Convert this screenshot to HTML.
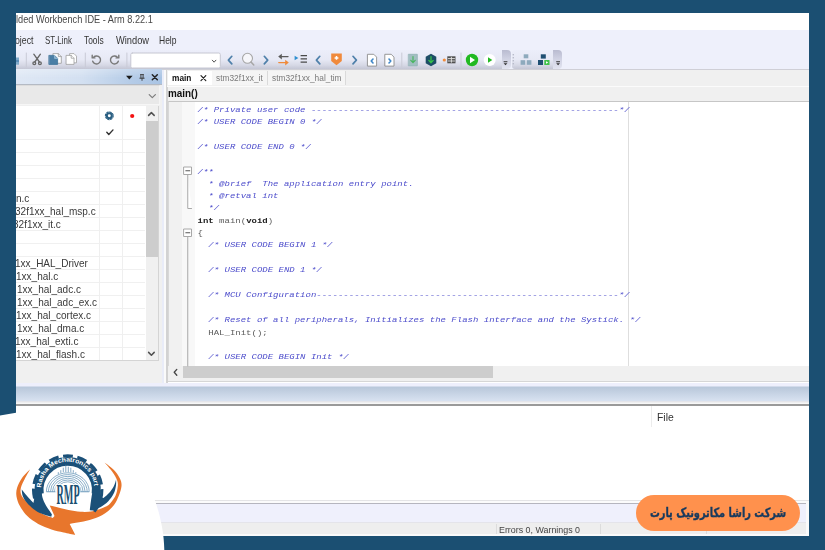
<!DOCTYPE html>
<html lang="en">
<head>
<meta charset="utf-8">
<title>Embedded Workbench IDE - Arm 8.22.1</title>
<style>
*{box-sizing:border-box;margin:0;padding:0}
html,body{width:825px;height:550px;overflow:hidden;background:#1b4f72}
body{position:relative;font-family:"Liberation Sans",sans-serif;color:#222}
.abs{position:absolute}
#win{position:absolute;left:16px;top:12px;width:793.3px;height:523.8px;background:#fff;overflow:hidden}
.t{position:absolute;white-space:nowrap;transform-origin:0 50%;font-family:"Liberation Sans",sans-serif}
#title{left:0;top:0;width:794px;height:18px;background:#fff}
#menu{left:0;top:18px;width:794px;height:20px;background:#eef0fb}
#tool{left:0;top:37.5px;width:794px;height:20px;background:#eef0fb}
.strip{position:absolute;top:0;height:19.5px;background:linear-gradient(#eceefa 0%,#e7e9f5 50%,#d6d8e5 80%,#c4c6d4 100%)}
.cap{position:absolute;top:0;width:9px;height:19.5px;border-radius:0 4px 4px 0;background:linear-gradient(#b9bbd0 0%,#cfd1e2 45%,#e2e4f0 100%)}
#toolline{left:0;top:57px;width:794px;height:1px;background:#cfcfd6}
/* left panel */
#lp{left:0;top:58px;width:146px;height:313px;background:#f0f0f0}
#lphead{left:0;top:-.8px;width:146px;height:16.200px;background:linear-gradient(180deg,rgba(255,255,255,.25) 0,rgba(255,255,255,0) 60%),linear-gradient(90deg,#dfe8f5 0,#d3e0f1 45%,#b4cbe7 80%,#a9c4e4 100%);border-bottom:1.200px solid #b4bac4}
#lpdrop{left:0;top:15.200px;width:143.500px;height:19.600px;background:#e9e9e9;border-bottom:1.500px solid #f6f6f6;border-right:1px solid #f4f4f4;border-top:1px solid #dcdcdc}
#tree{left:0;top:36px;width:143px;height:255px;background:#fff;border-right:1px solid #d4d4d4;border-bottom:1px solid #d4d4d4;overflow:hidden}
.row{position:absolute;left:0;width:129px;height:1px;background:#f0f0f0}
.col{position:absolute;top:0;width:1px;height:255px;background:#efefef}
#sb{left:129.5px;top:0;width:12.5px;height:254px;background:#f0f0f0}
#sbthumb{left:0;top:15px;width:12.5px;height:136px;background:#cdcdcd}
#lpb{left:146px;top:58px;width:4px;height:313px;background:linear-gradient(90deg,#e9ecf8 0,#e9ecf8 2.5px,#fafafa 2.5px)}
/* editor */
#ed{left:150px;top:58px;width:644px;height:312px;background:#f0f0f0;border-bottom:1px solid #d6d6d6}
#edframe{left:0;top:0;width:1.5px;height:313px;background:#d2d2d2}
#tabs{left:1px;top:0;width:642px;height:16px;background:#f0f0f0}
.tab{position:absolute;top:1px;height:14px;background:#f5f5f5;border-right:1px solid #dadada}
.tab.act{background:#fff;border:none}
#fnline{left:1px;top:15.5px;width:642px;height:1.5px;background:#fbfbfb}
#code{left:1.5px;top:31px;width:641.5px;height:265.2px;background:#fff;border-top:1px solid #c6c6c6;border-left:1px solid #d8d8d8;overflow:hidden}
#gut{left:0;top:0;width:27px;height:266px;background:linear-gradient(90deg,#f1f1f1 0,#f1f1f1 13px,#f8f8f8 13px,#f8f8f8 26.5px,#fff 26.5px)}
#margin{left:459.3px;top:0;width:1px;height:266px;background:#dedede}
pre{position:absolute;left:29px;top:2.4px;font-family:"Liberation Mono",monospace;font-size:9px;line-height:14.03px;color:#4c4ccb;font-style:italic;white-space:pre;filter:blur(.35px);transform:scaleY(.88);transform-origin:0 0}
pre b{color:#222;font-style:normal}
pre i{color:#5c5c5c;font-style:normal}
#hs{left:1.5px;top:296.2px;width:641.5px;height:12.2px;background:#f0f0f0}
#hsthumb{left:15px;top:0;width:310px;height:12.2px;background:#cdcdcd}
/* band */
#band{left:0;top:370.5px;width:794px;height:22px;background:linear-gradient(#eeeffc 0,#eeeffc 3px,#b8c7da 4px,#d7e1f0 17.5px,#e4e5ea 18.5px,#f4f4f4 20px,#fff 22px)}
#bandline{left:0;top:392.2px;width:794px;height:1.6px;background:#9a9a9a}
#build{left:0;top:394px;width:794px;height:96px;background:#fff}
#fileline{left:635px;top:394px;width:1px;height:21px;background:#ececec}
#bt1{left:0;top:487.5px;width:794px;height:1.5px;background:#e4e4e6}
#bt0{left:0;top:489px;width:794px;height:2px;background:#fbfbfb}
#bt2{left:0;top:490.6px;width:794px;height:1.6px;background:#b5b5be}
#bt{left:0;top:492px;width:794px;height:18px;background:#eff0fc}
#status{left:0;top:510px;width:794px;height:14px;background:#eeeeee;border-top:1px solid #e4e4ea}
.ssep{position:absolute;top:1px;width:1px;height:13px;background:#dcdcdc}
/* overlays */
#ov{position:absolute;left:0;top:0;width:825px;height:550px}
#pill{left:636px;top:495px;width:164px;height:36px;border-radius:18px;background:#ff914d}
#pill span{position:absolute;left:0;top:0;width:164px;height:36px;text-align:center;font-family:"DejaVu Sans","Liberation Sans",sans-serif;font-weight:bold;font-size:9.8px;line-height:36.500px;color:#173a5e;direction:rtl;white-space:nowrap;transform:scaleY(1.32);-webkit-text-stroke:.3px #173a5e}
</style>
</head>
<body>
<div id="win">
  <div id="title" class="abs"></div>
  <div id="menu" class="abs"></div>
  <div id="tool" class="abs">
    <div class="strip" style="left:0;width:486px"></div><div class="cap" style="left:485.5px"></div>
    <div class="strip" style="left:496px;width:42px;border-radius:3px 0 0 3px"></div><div class="cap" style="left:537px"></div>
  </div>
  <div id="toolline" class="abs"></div>

  <div id="lp" class="abs">
    <div id="lphead" class="abs"></div>
    <div id="lpdrop" class="abs"></div>
    <div id="tree" class="abs">
      <div class="row" style="top:33px"></div><div class="row" style="top:46px"></div><div class="row" style="top:59px"></div><div class="row" style="top:72px"></div><div class="row" style="top:85px"></div><div class="row" style="top:98px"></div><div class="row" style="top:111px"></div><div class="row" style="top:124px"></div><div class="row" style="top:137px"></div><div class="row" style="top:150px"></div><div class="row" style="top:163px"></div><div class="row" style="top:176px"></div><div class="row" style="top:189px"></div><div class="row" style="top:202px"></div><div class="row" style="top:215px"></div><div class="row" style="top:228px"></div><div class="row" style="top:241px"></div>
      <div class="col" style="left:83px"></div><div class="col" style="left:106px"></div>
      <div id="sb" class="abs"><div id="sbthumb" class="abs"></div></div>
    </div>
  </div>
  <div id="lpb" class="abs"></div>

  <div id="ed" class="abs">
    <div id="edframe" class="abs"></div>
    <div id="tabs" class="abs">
      <div class="tab act" style="left:0.5px;width:44px"></div>
      <div class="tab" style="left:44.5px;width:56.5px"></div>
      <div class="tab" style="left:101px;width:78px"></div>
    </div>
    <div id="fnline" class="abs"></div>
    <div id="code" class="abs">
      <div id="gut" class="abs"></div>
      <div id="margin" class="abs"></div>
<pre>/* Private user code ---------------------------------------------------------*/
/* USER CODE BEGIN 0 */

/* USER CODE END 0 */

/**
  * @brief  The application entry point.
  * @retval int
  */
<b>int</b> <i>main(</i><b>void</b><i>)</i>
<i>{</i>
  /* USER CODE BEGIN 1 */

  /* USER CODE END 1 */

  /* MCU Configuration--------------------------------------------------------*/

  /* Reset of all peripherals, Initializes the Flash interface and the Systick. */
  <i>HAL_Init();</i>

  /* USER CODE BEGIN Init */
</pre>
    </div>
    <div id="hs" class="abs"><div id="hsthumb" class="abs"></div></div>
  </div>

  <div id="band" class="abs"></div>
  <div id="bandline" class="abs"></div>
  <div id="build" class="abs"></div>
  <div id="fileline" class="abs"></div>
  <div id="bt1" class="abs"></div>
  <div id="bt0" class="abs"></div>
  <div id="bt2" class="abs"></div>
  <div id="bt" class="abs"></div>
  <div id="status" class="abs"><div class="ssep" style="left:480px"></div><div class="ssep" style="left:584px"></div><div class="ssep" style="left:690px"></div></div>
<div class="abs" style="left:789.500px;top:489px;width:4px;height:35px;background:#fafafa"></div><div class="abs" style="left:0;top:521.800px;width:794px;height:2px;background:#fafafa"></div>
<span class="t" style="left:-0.50px;top:1.47px;font-size:10.2px;line-height:13px;font-weight:normal;color:#484848;transform:scaleX(0.9025);filter:blur(0.35px)">lded Workbench IDE - Arm 8.22.1</span>
<span class="t" style="left:-0.80px;top:21.73px;font-size:10.3px;line-height:13px;font-weight:normal;color:#333;transform:scaleX(0.8500);filter:blur(0.35px)">oject</span>
<span class="t" style="left:29.00px;top:21.73px;font-size:10.3px;line-height:13px;font-weight:normal;color:#333;transform:scaleX(0.7703);filter:blur(0.35px)">ST-Link</span>
<span class="t" style="left:68.20px;top:21.73px;font-size:10.3px;line-height:13px;font-weight:normal;color:#333;transform:scaleX(0.8151);filter:blur(0.35px)">Tools</span>
<span class="t" style="left:100.20px;top:21.73px;font-size:10.3px;line-height:13px;font-weight:normal;color:#333;transform:scaleX(0.9010);filter:blur(0.35px)">Window</span>
<span class="t" style="left:142.50px;top:21.73px;font-size:10.3px;line-height:13px;font-weight:normal;color:#333;transform:scaleX(0.8260);filter:blur(0.35px)">Help</span>
<span class="t" style="left:0.15px;top:178.72px;font-size:11.5px;line-height:15px;font-weight:normal;color:#3a3a3a;transform:scaleX(0.8700);filter:blur(0.35px)">n.c</span>
<span class="t" style="left:-0.85px;top:191.72px;font-size:11.5px;line-height:15px;font-weight:normal;color:#3a3a3a;transform:scaleX(0.8700);filter:blur(0.35px)">32f1xx_hal_msp.c</span>
<span class="t" style="left:-2.84px;top:204.72px;font-size:11.5px;line-height:15px;font-weight:normal;color:#3a3a3a;transform:scaleX(0.8700);filter:blur(0.35px)">32f1xx_it.c</span>
<span class="t" style="left:-1.35px;top:243.72px;font-size:11.5px;line-height:15px;font-weight:normal;color:#3a3a3a;transform:scaleX(0.8700);filter:blur(0.35px)">1xx_HAL_Driver</span>
<span class="t" style="left:-0.28px;top:256.72px;font-size:11.5px;line-height:15px;font-weight:normal;color:#3a3a3a;transform:scaleX(0.8700);filter:blur(0.35px)">1xx_hal.c</span>
<span class="t" style="left:1.03px;top:269.72px;font-size:11.5px;line-height:15px;font-weight:normal;color:#3a3a3a;transform:scaleX(0.8700);filter:blur(0.35px)">1xx_hal_adc.c</span>
<span class="t" style="left:1.41px;top:282.72px;font-size:11.5px;line-height:15px;font-weight:normal;color:#3a3a3a;transform:scaleX(0.8700);filter:blur(0.35px)">1xx_hal_adc_ex.c</span>
<span class="t" style="left:-0.08px;top:295.72px;font-size:11.5px;line-height:15px;font-weight:normal;color:#3a3a3a;transform:scaleX(0.8700);filter:blur(0.35px)">1xx_hal_cortex.c</span>
<span class="t" style="left:1.20px;top:308.72px;font-size:11.5px;line-height:15px;font-weight:normal;color:#3a3a3a;transform:scaleX(0.8700);filter:blur(0.35px)">1xx_hal_dma.c</span>
<span class="t" style="left:-0.70px;top:321.72px;font-size:11.5px;line-height:15px;font-weight:normal;color:#3a3a3a;transform:scaleX(0.8700);filter:blur(0.35px)">1xx_hal_exti.c</span>
<span class="t" style="left:0.03px;top:334.72px;font-size:11.5px;line-height:15px;font-weight:normal;color:#3a3a3a;transform:scaleX(0.8700);filter:blur(0.35px)">1xx_hal_flash.c</span>
<span class="t" style="left:156.00px;top:59.10px;font-size:9.8px;line-height:13px;font-weight:bold;color:#111;transform:scaleX(0.8481);filter:blur(0.3px)">main</span>
<span class="t" style="left:200.00px;top:59.81px;font-size:9.2px;line-height:12px;font-weight:normal;color:#7a7a7a;transform:scaleX(0.9054);filter:blur(0.3px)">stm32f1xx_it</span>
<span class="t" style="left:256.00px;top:59.81px;font-size:9.2px;line-height:12px;font-weight:normal;color:#7a7a7a;transform:scaleX(0.9072);filter:blur(0.3px)">stm32f1xx_hal_tim</span>
<span class="t" style="left:152.30px;top:74.02px;font-size:11.2px;line-height:15px;font-weight:bold;color:#111;transform:scaleX(0.8849);filter:blur(0.3px)">main()</span>
<span class="t" style="left:641.20px;top:397.76px;font-size:10.5px;line-height:14px;font-weight:normal;color:#333;transform:scaleX(0.9869);filter:blur(0.3px)">File</span>
<span class="t" style="left:483.00px;top:512.34px;font-size:9.4px;line-height:12px;font-weight:normal;color:#444;transform:scaleX(0.9460);filter:blur(0.3px)">Errors 0, Warnings 0</span>
  <div class="abs" style="left:0;top:0;width:794px;height:.8px;background:#1b4f72"></div>
</div>

<svg id="ov" viewBox="0 0 825 550">
<g id="toolbar-icons" style="filter:blur(.3px)" fill="none" stroke-linecap="round" stroke-linejoin="round">
  <!-- partial icon at left edge -->
  <rect x="16" y="57.500" width="3" height="7.200" fill="#7fa9c9" stroke="none"/><rect x="16" y="60" width="3" height="2" fill="#5b8db6" stroke="none"/>
  <!-- separators -->
  <g stroke="#c9cad6" stroke-width="1"><path d="M26.300 53v14M85.300 53v14M126.900 53v14M401.8 53v14M461 53v14"/></g>
  <!-- scissors -->
  <g stroke="#666" stroke-width="1.300"><path d="M33.800 54.200l5.600 7.800M40.400 54.200l-5.600 7.800"/><circle cx="34.300" cy="63.200" r="1.400"/><circle cx="39.900" cy="63.200" r="1.400"/></g>
  <!-- copy -->
  <g stroke-width=".8"><path d="M53.300 53.600h5l3 3v6.700h-8z" fill="#fff" stroke="#999"/><path d="M58.300 53.600v3h3" stroke="#999"/><path d="M49.200 55.400h5.400l3 3v6h-8.400z" fill="#4b7fa6" stroke="#3f7399"/><path d="M54.600 55.400v3h3" stroke="#9fc0d8" fill="#7fa8c6"/></g>
  <!-- paste -->
  <g stroke="#a0a0a0" stroke-width=".8" fill="#fff"><path d="M70 53.600h4l2.500 2.500v6.700h-6.500z"/><path d="M66.400 55.400h4.800l2.800 2.800v6.200h-7.600z"/><path d="M71.200 55.400v2.800h2.800"/></g>
  <!-- undo / redo -->
  <g stroke="#787878" stroke-width="1.400"><path d="M93.600 57.200a4 4 0 1 1-.9 4"/><path d="M92.200 55.200v2.700h2.700"/></g>
  <g stroke="#787878" stroke-width="1.400"><path d="M117.400 57.200a4 4 0 1 0 .9 4"/><path d="M118.800 55.200v2.700h-2.700"/></g>
  <!-- combo -->
  <rect x="130.800" y="53" width="89.500" height="15" rx="1.5" fill="#fff" stroke="#c6c7d2" stroke-width="1"/>
  <path d="M212.3 60.2l1.8 2 1.8-2" stroke="#555" stroke-width="1"/>
  <!-- nav chevrons -->
  <g stroke="#4f80aa" stroke-width="1.700"><path d="M231.800 56.300l-3.400 3.800 3.400 3.800"/><path d="M264.300 56.300l3.400 3.800-3.400 3.800"/><path d="M319.800 56.300l-3.400 3.800 3.400 3.800"/><path d="M353 56.300l3.400 3.800-3.400 3.800"/></g>
  <!-- magnifier -->
  <g stroke="#a6a6a6" stroke-width="1.100"><circle cx="247.500" cy="58.300" r="5" fill="#f6f6fa"/><path d="M251 62l2.800 3" stroke-width="1.500"/></g>
  <!-- swap arrows -->
  <g stroke-width="1.400"><path d="M288 56.600h-7" stroke="#5a5a5a"/><path d="M281.800 53.800v5.600l-3.600-2.800z" fill="#5a5a5a" stroke="none"/><path d="M278.800 62.600h7" stroke="#f08a3a"/><path d="M285.200 59.800v5.600l3.600-2.800z" fill="#f08a3a" stroke="none"/></g>
  <!-- go to list -->
  <path d="M294.600 55.800l3.800 2.200-3.800 2.200z" fill="#2f8fd0" stroke="none"/>
  <g stroke="#4a4a4a" stroke-width="1.300" stroke-linecap="butt"><path d="M300.600 55.600h6.400M300.600 58.900h6.400M300.600 62.200h6.400"/></g>
  <!-- bookmark shield -->
  <path d="M331.200 53.600h10.600v7.400l-5.300 4.300l-5.300-4.300z" fill="#f08a3c" stroke="none" stroke-linejoin="round"/>
  <path d="M336.500 56v3.800M334.600 57.900h3.800" stroke="#fff" stroke-width="1.500" stroke-linecap="butt"/>
  <!-- page left / right -->
  <g stroke="#8d8d8d" stroke-width=".9" fill="#fff"><path d="M367.8 54.3h6l2.8 2.8v9h-8.800z"/><path d="M385.2 54.3h6l2.8 2.8v9h-8.800z"/></g>
  <g stroke="#3f86c8" stroke-width="1.600"><path d="M373 59l-1.800 2 1.800 2"/><path d="M389 59l1.800 2-1.800 2"/></g>
  <!-- compile (green page) -->
  <rect x="408.700" y="54.300" width="8.600" height="11.500" fill="#a2bfc2" stroke="#8fb0b4" stroke-width=".8"/>
  <path d="M413 56.500v6m-2.200-2.200l2.200 2.400 2.200-2.400" stroke="#49b561" stroke-width="1.200"/>
  <!-- make (hexagon) -->
  <path d="M431 53.800l5.300 3v6.400l-5.300 3-5.300-3v-6.400z" fill="#1d4d66" stroke="none"/>
  <path d="M431 56.600v6m-2.200-2.200l2.200 2.400 2.200-2.400" stroke="#35c24a" stroke-width="1.300"/>
  <!-- toggle breakpoint -->
  <circle cx="444.300" cy="60" r="1.600" fill="#f28c3c" stroke="none"/>
  <rect x="447.300" y="56.300" width="8.200" height="7" fill="#505050" stroke="none"/>
  <path d="M448.300 58.600h6.200M448.300 61h6.200M451.400 57.300v5" stroke="#e4e4e4" stroke-width=".9"/>
  <!-- debug buttons -->
  <circle cx="472" cy="60" r="6.200" fill="#21b921" stroke="none"/>
  <path d="M470 56.800l5 3.200-5 3.200z" fill="#fff" stroke="none"/>
  <circle cx="489.700" cy="60" r="6" fill="#fff" stroke="none"/>
  <path d="M488 57.300l4.300 2.700-4.300 2.700z" fill="#21b921" stroke="none"/>
  <!-- toolbar overflow arrows -->
  <g fill="#333" stroke="none"><path d="M503.600 61.300h3.800v.9h-3.800zM503.600 63.200h3.800l-1.900 2z"/><path d="M556.200 61.300h3.800v.9h-3.800zM556.200 63.200h3.800l-1.900 2z"/></g>
  <!-- gripper -->
  <g fill="#b9bccb" stroke="none"><rect x="512.600" y="54" width="1.400" height="1.400"/><rect x="512.600" y="57" width="1.400" height="1.400"/><rect x="512.600" y="60" width="1.400" height="1.400"/><rect x="512.600" y="63" width="1.400" height="1.400"/></g>
  <!-- network icons -->
  <g fill="#8eaabd" stroke="none"><rect x="523.700" y="54.300" width="4.600" height="4"/><rect x="520.600" y="60.200" width="4.600" height="4.600"/><rect x="526.800" y="60.200" width="4.600" height="4.600"/></g>
  <g stroke="none"><rect x="540.800" y="54.300" width="5" height="4.300" fill="#1f4f72"/><rect x="538" y="60" width="5" height="5" fill="#1f4f72"/><rect x="544.300" y="60" width="5.200" height="5" fill="#3fc24a"/><path d="M546 61.200l2.300 1.300-2.300 1.300z" fill="#fff"/></g>
</g>
<g id="panel-icons" fill="none" stroke-linecap="round" stroke-linejoin="round">
  <path d="M126 75.800h6.600l-3.300 3.800z" fill="#1a1a1a" stroke="none"/>
  <g stroke="#3a3a3a" stroke-width=".9"><path d="M140.600 74.600h2.800M140.900 74.600v3.600M143.100 74.600v3.600M139.800 78.200h4.400M142 78.200v2.200"/></g>
  <path d="M152.300 74.800l5 5M157.300 74.800l-5 5" stroke="#222" stroke-width="1.500"/>
  <path d="M149.200 94.600l3.100 3 3.100-3" stroke="#7c7c7c" stroke-width="1.200"/>
  <!-- tree gear, dot, check, scroll arrows -->
  <circle cx="109.300" cy="115.800" r="2.500" stroke="#2a5f82" stroke-width="2.100"/>
  <circle cx="109.300" cy="115.800" r="3.900" stroke="#2a5f82" stroke-width="1.100" stroke-dasharray="1.560 1.500"/>
  <circle cx="132.200" cy="116" r="2.100" fill="#f41212" stroke="none"/>
  <path d="M106.800 132.300l2 2.200 4.200-4.600" stroke="#333" stroke-width="1.400"/>
  <path d="M148.600 115.400l2.800-2.800 2.800 2.800" stroke="#505050" stroke-width="1.500"/>
  <path d="M148.600 352.400l2.800 2.800 2.800-2.800" stroke="#505050" stroke-width="1.500"/>
  <!-- tab close -->
  <path d="M201 75.600l4.800 5M205.800 75.600l-4.800 5" stroke="#222" stroke-width="1.200"/>
  <!-- fold markers -->
  <g stroke="#a8a8a8" stroke-width="1" fill="#fff"><rect x="184" y="167" width="7.500" height="7.500"/><rect x="184" y="229" width="7.500" height="7.500"/><path d="M187.750 174.500v34h3.800M187.750 236.500v129.500"/></g>
  <path d="M185.800 170.750h4M185.800 232.750h4" stroke="#555" stroke-width="1"/>
  <!-- hscroll arrow -->
  <path d="M176.800 369.400l-2.600 2.900 2.600 2.900" stroke="#444" stroke-width="1.300"/>
</g>

<path d="M0 415.500L16 412.700V420H150V488C155.500 500 164 524 164.300 550H0z" fill="#fff"/>
<g id="logo" transform="translate(67.300 492.200)">
  <path d="M-37.1 -23.0C-38.5 -21.6 -43.1 -17.4 -45.3 -14.3C-47.5 -11.2 -49.3 -7.6 -50.2 -4.5C-51.1 -1.4 -51.3 1.1 -50.8 4.2C-50.3 7.2 -49.2 10.5 -47.4 13.8C-45.6 17.1 -43.0 20.9 -40.0 23.9C-37.0 26.9 -33.1 29.5 -29.1 31.7C-25.1 33.9 -20.0 35.8 -15.8 37.2C-11.6 38.6 -7.7 39.3 -3.7 40.2C0.3 41.1 6.0 42.2 7.9 42.6L2.4 31.7C4.2 31.4 9.5 30.7 13.3 29.9C17.1 29.1 21.4 28.3 25.4 26.9C29.4 25.5 34.0 23.8 37.5 21.4C41.0 19.0 44.4 15.8 46.7 12.8C49.0 9.8 50.2 6.8 51.5 3.6C52.8 0.4 54.0 -3.3 54.2 -6.2C54.4 -9.1 54.0 -11.1 52.6 -13.8C51.2 -16.5 48.7 -20.0 46.1 -22.6C43.5 -25.2 38.8 -28.5 37.3 -29.7C38.6 -28.1 42.9 -23.4 45.0 -20.4C47.1 -17.4 49.0 -14.2 49.9 -11.7C50.8 -9.1 50.7 -7.6 50.4 -5.1C50.1 -2.5 49.5 0.9 48.2 3.6C46.9 6.3 44.6 9.3 42.8 11.2C41.0 13.1 40.4 13.5 37.5 14.8C34.6 16.1 29.4 18.2 25.4 19.0C21.4 19.8 17.3 19.8 13.3 19.6C9.3 19.4 5.2 18.6 1.2 17.8C-2.8 17.0 -7.8 15.6 -10.9 14.8C-14.0 14.1 -16.5 13.6 -17.6 13.3L-12.8 23.9L-14.6 25.7C-16.0 25.2 -20.1 24.1 -23.1 22.6C-26.1 21.1 -29.8 18.8 -32.8 16.6C-35.8 14.4 -39.0 11.6 -41.2 9.3C-43.4 7.0 -45.2 4.9 -46.1 2.6C-47.0 0.3 -47.0 -1.9 -46.4 -4.5C-45.8 -7.1 -44.1 -10.1 -42.6 -13.2C-41.1 -16.3 -38.0 -21.4 -37.1 -23.0z" fill="#e8762c"/>
  <path d="M-25.02 20.68A34.200 34.200 0 1 1 25.82 20.68" fill="none" stroke="#1b5078" stroke-width="3" stroke-dasharray="9.74 4.58" stroke-dashoffset="12.03"/>
  <path d="M-27.97 1.79A28.650 28.650 0 1 1 28.77 1.79" fill="none" stroke="#1b5078" stroke-width="8.900"/>
  <path d="M-45.6 -2.8C-45.4 -1.6 -45.3 2.0 -44.4 4.2C-43.5 6.4 -42.2 8.4 -40.4 10.5C-38.6 12.6 -36.0 15.2 -33.6 17.0C-31.2 18.8 -28.9 20.1 -26.0 21.4C-23.1 22.7 -17.7 24.1 -16.0 24.6L-15.4 22.0C-16.4 20.6 -19.6 16.4 -21.2 13.6C-22.8 10.8 -24.2 7.7 -24.9 5.1C-25.6 2.5 -25.4 -1.0 -25.5 -2.2L-33.5 -2.2L-33.2 7.4L-33.9 10.8C-34.2 10.4 -34.8 9.9 -36.0 8.6C-37.2 7.3 -39.3 5.0 -40.9 3.1C-42.5 1.2 -44.8 -1.8 -45.6 -2.8z" fill="#1b5078"/>
  <path d="M48.8 -12.8C48.8 -11.7 49.0 -8.6 48.6 -6.2C48.2 -3.8 47.7 -1.1 46.4 1.4C45.1 3.9 43.2 6.7 41.0 9.0C38.8 11.3 35.6 13.4 33.0 15.0C30.4 16.6 26.7 17.8 25.4 18.3L22.5 18.0C22.6 17.3 22.7 15.8 23.0 13.6C23.3 11.4 23.8 7.7 24.2 5.1C24.6 2.5 25.2 -1.0 25.4 -2.2L33.5 -2.2L33.0 4.7L36.2 5.8C37.2 4.9 40.5 2.3 42.2 0.3C43.9 -1.7 45.5 -4.0 46.6 -6.2C47.7 -8.4 48.4 -11.7 48.8 -12.8z" fill="#1b5078"/>
  <g fill="none" stroke="#6f9cbd" stroke-width=".85" transform="translate(.500 -.500) scale(1.020 .9)">
    <path d="M-21 0A21 21 0 0 1 21 0"/><path d="M-19 0A19 19 0 0 1 19 0"/><path d="M-17 0A17 17 0 0 1 17 0"/><path d="M-15 0A15 15 0 0 1 15 0"/><path d="M-13 0A13 13 0 0 1 13 0"/><path d="M-11 0A11 11 0 0 1 11 0"/>
    <path d="M-21 0h10M11 0h10" stroke-width="1.200"/>
  </g>
  <g stroke="#4f84aa" stroke-width=".7" fill="none"><path d="M-9-18v-2M-6.500-19v-3M-4-20v-4.500M-1.500-20v-7.500M1-20v-5.500M3.500-20v-4.500M6-19.500v-2.500M8.500-18.500v-1.500"/></g>
  <rect x="-12" y="-8" width="25" height="8.500" fill="#fff" opacity=".9"/>
  <text transform="translate(-10.800 11.400) scale(.345 1)" font-family="'Liberation Serif',serif" font-weight="bold" font-size="29.500" fill="#1b4f72">RMP</text>
  <path id="ringpath" d="M-26.14 -4.06A26.600 26.600 0 1 1 27.00 -2.20" fill="none"/>
  <text font-family="'Liberation Sans',sans-serif" font-weight="bold" font-size="6.300" fill="#fff"><textPath href="#ringpath" startOffset="0.5" textLength="80.500" lengthAdjust="spacingAndGlyphs">Rasha Mechatronics part</textPath></text>
</g>

</svg>

<div id="pill" class="abs"><span>شرکت راشا مکاترونیک پارت</span></div>
</body>
</html>
